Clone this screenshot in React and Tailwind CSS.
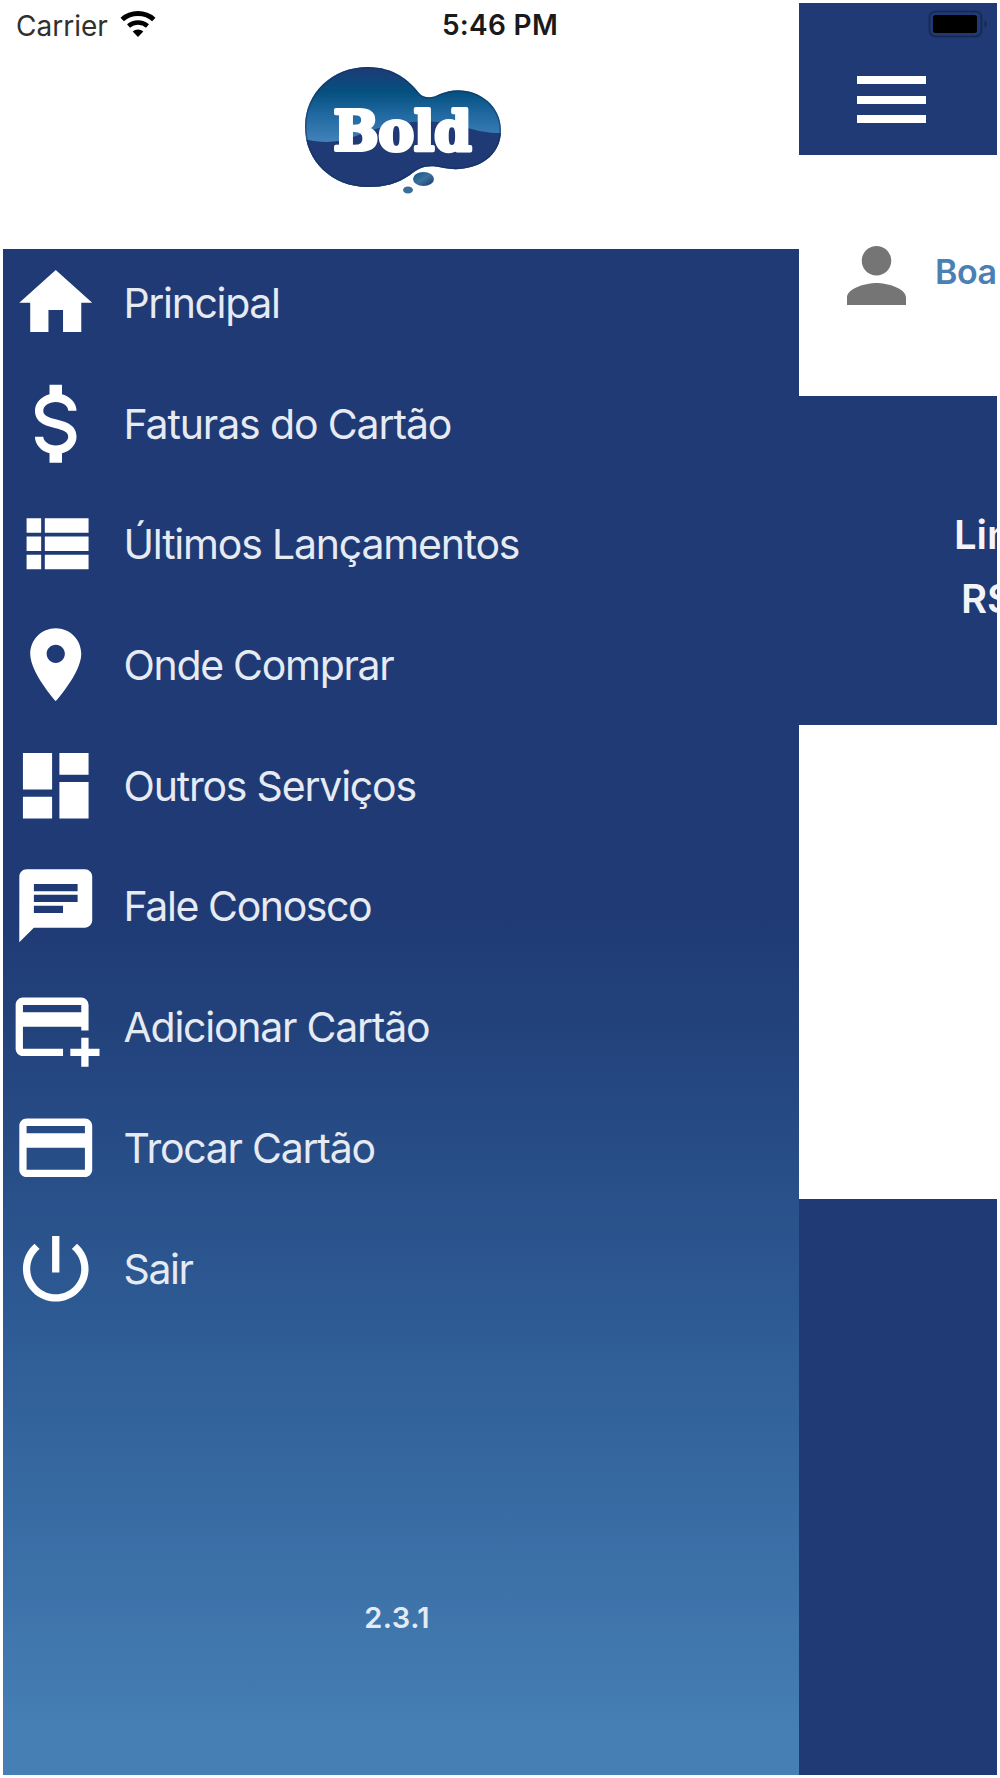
import React from "react";

const menu = [
  { label: "Principal", spacing: "tracking-[-1.35px]", d: "M10 20v-6h4v6h5v-8h3L12 3 2 12h3v8z" },
  {
    label: "Faturas do Cartão",
    spacing: "tracking-[-1.13px]",
    transform: "translate(12 12) scale(1.14 1.19) translate(-12 -12)",
    d: "M7,15H9C9,16.08 10.37,17 12,17C13.63,17 15,16.08 15,15C15,13.9 13.96,13.5 11.76,12.97C9.64,12.44 7,11.78 7,9C7,7.21 8.47,5.69 10.5,5.18V3H13.5V5.18C15.53,5.69 17,7.21 17,9H15C15,7.92 13.63,7 12,7C10.37,7 9,7.92 9,9C9,10.1 10.04,10.5 12.24,11.03C14.36,11.56 17,12.22 17,15C17,16.79 15.53,18.31 13.5,18.82V21H10.5V18.82C8.47,18.31 7,16.79 7,15Z",
  },
  {
    label: "Últimos Lançamentos",
    spacing: "tracking-[-1.2px]",
    d: "M4 14h4v-4H4v4zm0 5h4v-4H4v4zM4 9h4V5H4v4zm5 5h12v-4H9v4zm0 5h12v-4H9v4zM9 5v4h12V5H9z",
  },
  {
    label: "Onde Comprar",
    spacing: "tracking-[-1.3px]",
    d: "M12 2C8.13 2 5 5.13 5 9c0 5.25 7 13 7 13s7-7.75 7-13c0-3.87-3.13-7-7-7zm0 9.5c-1.38 0-2.5-1.12-2.5-2.5s1.12-2.5 2.5-2.5 2.5 1.12 2.5 2.5-1.12 2.5-2.5 2.5z",
  },
  { label: "Outros Serviços", spacing: "tracking-[-1.2px]", d: "M3 13h8V3H3v10zm0 8h8v-6H3v6zm10 0h8V11h-8v10zm0-18v6h8V3h-8z" },
  {
    label: "Fale Conosco",
    spacing: "tracking-[-1.4px]",
    d: "M20 2H4c-1.1 0-1.99.9-1.99 2L2 22l4-4h14c1.1 0 2-.9 2-2V4c0-1.1-.9-2-2-2zM6 9h12v2H6V9zm8 5H6v-2h8v2zm4-6H6V6h12v2z",
  },
  {
    label: "Adicionar Cartão",
    spacing: "tracking-[-1.25px]",
    d: "M21,18H24V20H21V23H19V20H16V18H19V15H21V18M19,8V6H3V8H19M19,12H3V18H14V20H3C1.89,20 1,19.1 1,18V6C1,4.89 1.89,4 3,4H19A2,2 0 0,1 21,6V13H19V12Z",
  },
  {
    label: "Trocar Cartão",
    spacing: "tracking-[-1.25px]",
    d: "M20 4H4c-1.11 0-1.99.89-1.99 2L2 18c0 1.11.89 2 2 2h16c1.11 0 2-.89 2-2V6c0-1.11-.89-2-2-2zm0 14H4v-6h16v6zm0-10H4V6h16v2z",
  },
  {
    label: "Sair",
    spacing: "tracking-[-1.4px]",
    d: "M13 3h-2v10h2V3zm4.83 2.17l-1.42 1.42C17.99 7.86 19 9.81 19 12c0 3.87-3.13 7-7 7s-7-3.13-7-7c0-2.19 1.01-4.14 2.58-5.42L6.17 5.17C4.23 6.82 3 9.26 3 12c0 4.97 4.03 9 9 9s9-4.03 9-9c0-2.74-1.23-5.18-3.17-6.83z",
  },
];

function BoldLogo() {
  const body =
    "M78 17 C104 17 120 31 129 43 C134 49 143 48 150 44 C176 32 211 49 211 80 C211 112 178 123 154 118 C137 114 130 117 120 125 C107 134 94 137 78 137 C42 137 15 111 15 77 C15 43 42 17 78 17 Z";
  return (
    <svg viewBox="0 0 230 160" width="230" height="160" role="img" aria-label="Bold">
      <defs>
        <linearGradient id="sky" x1="0" y1="17" x2="0" y2="95" gradientUnits="userSpaceOnUse">
          <stop offset="0" stopColor="#1e3a75" />
          <stop offset="0.32" stopColor="#04507f" />
          <stop offset="0.6" stopColor="#2068a0" />
          <stop offset="1" stopColor="#4585bd" />
        </linearGradient>
        <linearGradient id="drop" x1="0" y1="0" x2="1" y2="1">
          <stop offset="0" stopColor="#15527f" />
          <stop offset="0.5" stopColor="#3b729e" />
          <stop offset="1" stopColor="#1b3563" />
        </linearGradient>
        <clipPath id="shape">
          <path d={body} />
        </clipPath>
      </defs>
      <path d={body} fill="url(#sky)" />
      <g clipPath="url(#shape)">
        <path d="M10 88 C32 94 48 93 66 86 C90 76 120 70 146 72 C172 73 184 84 214 83 V140 H10 Z" fill="#1f3a75" />
        <path d={body} fill="none" stroke="#16305f" strokeOpacity="0.55" strokeWidth="3" />
      </g>
      <ellipse cx="133.5" cy="129" rx="10.5" ry="7" fill="url(#drop)" />
      <ellipse cx="118" cy="140" rx="5" ry="3.5" fill="#3a6d98" />
      <text
        x="43.5"
        y="100"
        textLength="138"
        lengthAdjust="spacingAndGlyphs"
        fill="#fff"
        stroke="#fff"
        strokeWidth="4"
        strokeLinejoin="round"
        className="font-['DejaVu_Serif',serif] text-[54px] font-bold"
      >
        Bold
      </text>
    </svg>
  );
}

function StatusBar() {
  return (
    <div className="absolute inset-x-0 top-0 flex h-[50px] items-center justify-center text-black">
      <div className="absolute left-[16px] top-0 flex h-[50px] items-center">
        <span className="w-[103px] whitespace-nowrap pt-[1px] text-[28px] text-[#303030]">Carrier</span>
        <svg viewBox="0 0 36 28" width="36" height="28" className="-mt-[3px] ml-[1px]" fill="none" stroke="#000">
          <path d="M2.2 9.5 C11 1.5 25 1.5 33.8 9.5" strokeWidth="5" />
          <path d="M8.5 16 C14 11.2 22 11.2 27.5 16" strokeWidth="4.5" />
          <path d="M18 27 L12.7 21.5 C15.5 18.8 20.5 18.8 23.3 21.5 Z" fill="#000" stroke="none" />
        </svg>
      </div>
      <span className="whitespace-nowrap text-[28px] font-semibold tracking-[0.3px] text-[#1a1a1a]">5:46 PM</span>
      <svg viewBox="0 0 60 28" width="60" height="28" className="absolute left-[928px] top-[10px]">
        <rect x="1.5" y="1.5" width="52" height="25" rx="6" fill="none" stroke="#182b57" strokeWidth="2" />
        <rect x="5" y="5" width="44" height="18" rx="2.5" fill="#000" />
        <path d="M57 10.5 q3 3.5 0 7z" fill="#182b57" stroke="#182b57" />
      </svg>
    </div>
  );
}

function Drawer() {
  return (
    <aside className="flex w-[796.4px] shrink-0 flex-col">
      <header className="flex h-[245.5px] justify-center bg-white pl-[7px] pt-[47px]">
        <BoldLogo />
      </header>
      <nav className="flex grow flex-col bg-[linear-gradient(180deg,#1f3a74_0%,#1f3a74_43%,#22417b_50%,#2d5992_69%,#3c71a8_87%,#457fb3_97%,#457fb3_100%)] pt-[10.5px]">
        {menu.map((item) => (
          <a key={item.label} className="flex h-[120.7px] items-start">
            <svg viewBox="0 0 24 24" className="ml-[9px] h-[87.5px] w-[87.5px] shrink-0 overflow-visible" fill="#fff">
              <path d={item.d} transform={item.transform} />
            </svg>
            <span className={`ml-[24px] mt-[14px] whitespace-nowrap text-[41px] leading-[60px] text-[#e6eaf3] ${item.spacing}`}>
              {item.label}
            </span>
          </a>
        ))}
        <p className="mt-[253px] h-[40px] pr-[8px] text-center text-[29px] font-semibold leading-[40px] text-[#e3ebf4]">
          <span className="tracking-[0.5px]">2.3.1</span>
        </p>
      </nav>
    </aside>
  );
}

function AccountPage() {
  return (
    <main className="flex min-w-0 grow flex-col overflow-hidden bg-[#1f3a74]">
      <header className="flex h-[152px] flex-col gap-[11.5px] pl-[57.6px] pt-[73px]">
        <span className="h-[8px] w-[69px] bg-white" />
        <span className="h-[8px] w-[69px] bg-white" />
        <span className="h-[8px] w-[69px] bg-white" />
      </header>
      <section className="flex h-[241px] items-start bg-white pt-[76px]">
        <svg viewBox="4 4 16 16" className="ml-[47.6px] mt-[15px] h-[59px] w-[59px] shrink-0" fill="#757575">
          <path d="M12 12c2.21 0 4-1.79 4-4s-1.79-4-4-4-4 1.79-4 4 1.79 4 4 4zm0 2c-2.67 0-8 1.34-8 4v2h16v-2c0-2.66-5.33-4-8-4z" />
        </svg>
        <span className="ml-[29px] mt-[21px] text-[34px] font-semibold leading-[40px] tracking-[-0.5px] text-[#4a80b3]">Boa</span>
      </section>
      <section className="flex h-[329px] flex-col whitespace-nowrap pt-[107px] text-[40px] font-semibold leading-[64px] text-[#f2f4f8]">
        <span className="ml-[154.6px]">Limite</span>
        <span className="ml-[161.6px]">R$</span>
      </section>
      <section className="h-[474px] bg-white" />
    </main>
  );
}

export default function App() {
  return (
    <div className="relative h-[1778px] w-[1000px] overflow-hidden bg-white font-['Inter','Liberation_Sans',sans-serif]">
      <div className="flex h-full p-[3px]">
        <Drawer />
        <AccountPage />
      </div>
      <StatusBar />
    </div>
  );
}
